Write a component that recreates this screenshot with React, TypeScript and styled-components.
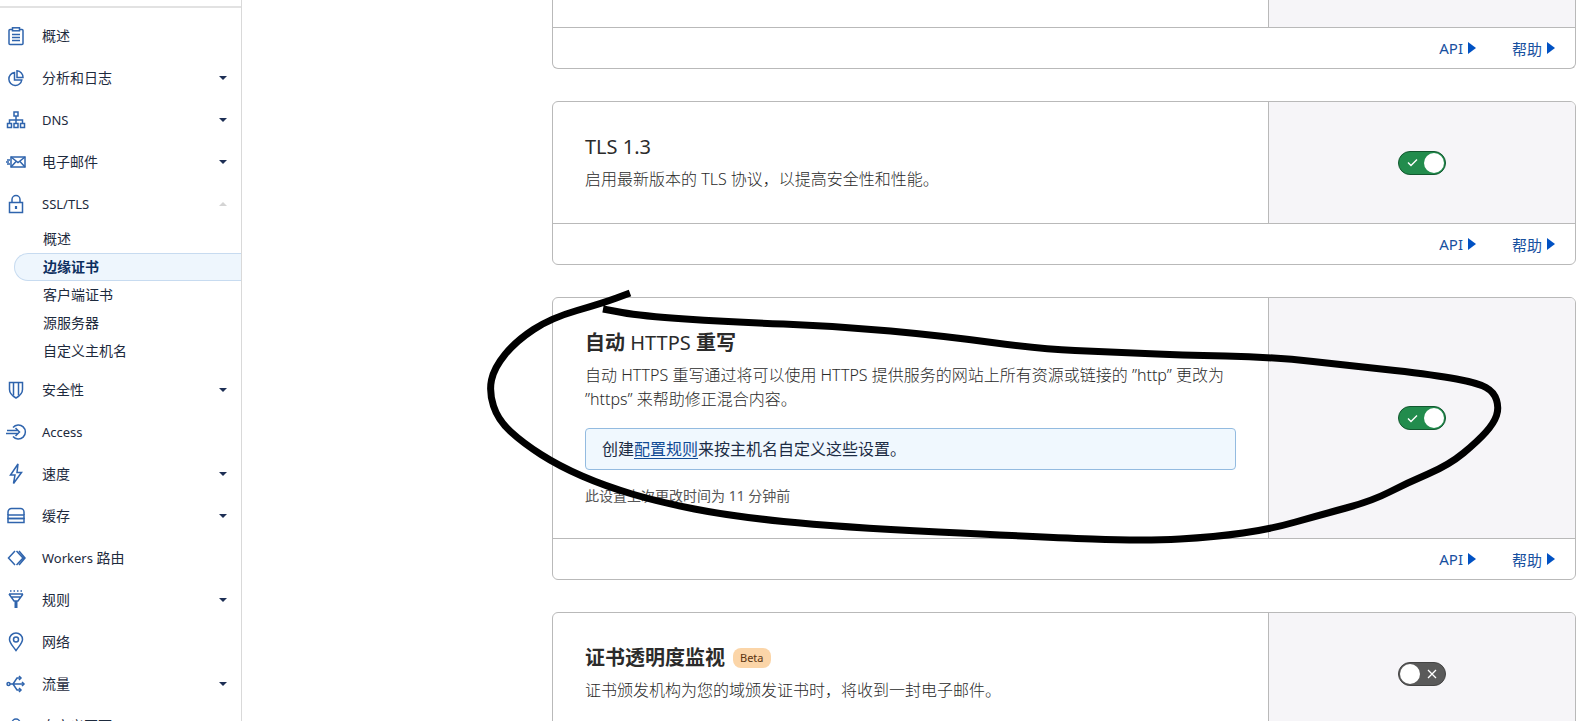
import React from 'react';
import styled, { createGlobalStyle } from 'styled-components';

const GlobalStyle = createGlobalStyle`
  html, body {
    margin: 0;
    padding: 0;
    background: #fff;
  }
  body {
    font-family: "Noto Sans", "Noto Sans CJK SC", sans-serif;
    color: #313131;
  }
`;

const Page = styled.div`
  position: relative;
  display: flex;
  width: 1582px;
  height: 721px;
  overflow: hidden;
`;

const Sidebar = styled.nav`
  flex: 0 0 242px;
  box-sizing: border-box;
  border-right: 1px solid #d9d9d9;
  padding-top: 6px;
`;

const SidebarTop = styled.div`
  border-top: 2px solid #e2e2e2;
  padding-top: 7px;
`;

const NavRow = styled.div`
  display: flex;
  align-items: center;
  height: 42px;
  padding-left: 7px;
  font-size: 14px;
  color: #1d2a3d;
`;

const NavIcon = styled.svg`
  flex: 0 0 18px;
  width: 18px;
  height: 18px;
  margin-right: 17px;
  fill: none;
  stroke: #2f64ad;
  stroke-width: 1.5;
  overflow: visible;
`;

const NavLabel = styled.span`
  flex: 1;
  margin-bottom: 2px;
`;

const NavLatin = styled.span`
  font-size: 13px;
`;

const Caret = styled.span<{ $up?: boolean }>`
  width: 0;
  height: 0;
  margin-right: 14px;
  border-left: 4px solid transparent;
  border-right: 4px solid transparent;
  ${(p) =>
    p.$up ? 'border-bottom: 4px solid #d4d4d4;' : 'border-top: 4px solid #1d2f55;'}
`;

const SubList = styled.div`
  padding-bottom: 4px;
`;

const SubRow = styled.div<{ $active?: boolean }>`
  box-sizing: border-box;
  height: 28px;
  line-height: 26px;
  font-size: 14px;
  margin-left: 14px;
  padding-left: 28px;
  border: 1px solid ${(p) => (p.$active ? '#c7dbf0' : 'transparent')};
  border-right: none;
  border-radius: 14px 0 0 14px;
  color: ${(p) => (p.$active ? '#0d2f5f' : '#1d2a3d')};
  font-weight: ${(p) => (p.$active ? 700 : 400)};
  background: ${(p) => (p.$active ? '#eef6fd' : 'transparent')};
`;

const Content = styled.main`
  flex: 1;
  padding-left: 310px;
`;

const Card = styled.section<{ $cut?: boolean }>`
  width: 1024px;
  box-sizing: border-box;
  margin-bottom: 32px;
  border: 1px solid #b9b9b9;
  border-radius: ${(p) => (p.$cut ? '0 0 6px 6px' : '6px')};
  ${(p) => p.$cut && 'border-top: none;'}
  overflow: hidden;
`;

const CardMain = styled.div<{ $height: number }>`
  display: flex;
  height: ${(p) => p.$height}px;
`;

const CardBody = styled.div`
  flex: 0 0 716px;
  box-sizing: border-box;
  display: flex;
  flex-direction: column;
  justify-content: center;
  padding: 0 32px 1px;
  border-right: 1px solid #b9b9b9;
`;

const CardSide = styled.div`
  flex: 1;
  display: flex;
  align-items: center;
  justify-content: center;
  background: #f6f5f8;
`;

const CardFooter = styled.div`
  display: flex;
  justify-content: flex-end;
  align-items: center;
  gap: 36px;
  height: 40px;
  padding-right: 20px;
  border-top: 1px solid #b9b9b9;
`;

const FooterLink = styled.a`
  display: flex;
  align-items: center;
  gap: 5px;
  font-size: 15px;
  color: #17509f;
`;

const Arrow = styled.span`
  width: 0;
  height: 0;
  border-top: 6.5px solid transparent;
  border-bottom: 6.5px solid transparent;
  border-left: 8px solid #0051c3;
`;

const Title = styled.h3`
  display: flex;
  align-items: center;
  gap: 8px;
  margin: 0 0 6px;
  height: 28px;
  line-height: 28px;
  font-size: 20px;
  font-weight: 400;
  color: #2b2b2b;
  white-space: pre;
`;

const TitleCjk = styled.span`
  font-weight: 700;
`;

const Badge = styled.span`
  padding: 0 7px;
  height: 20px;
  line-height: 20px;
  border-radius: 8px;
  background: #fbd5a8;
  color: #5c3410;
  font-size: 11px;
`;

const Description = styled.p`
  margin: 0;
  font-size: 16px;
  line-height: 24px;
  font-weight: 300;
  color: #2a2a2a;
`;

const Callout = styled.div`
  box-sizing: border-box;
  height: 42px;
  line-height: 40px;
  margin-top: 17px;
  padding-left: 16px;
  border: 1px solid #93bbe0;
  border-radius: 4px;
  background: #f0f8fe;
  font-size: 16px;
  color: #1c2c44;
`;

const CalloutLink = styled.a`
  color: #0f4a94;
  text-decoration: underline;
  text-underline-offset: 3px;
`;

const Meta = styled.div`
  margin-top: 16px;
  height: 20px;
  line-height: 20px;
  font-size: 14px;
  color: #555;
`;

const Toggle = styled.div<{ $on: boolean }>`
  position: relative;
  box-sizing: border-box;
  width: 48px;
  height: 24px;
  border-radius: 12px;
  background: ${(p) => (p.$on ? '#228c4d' : '#5a5a5a')};
  border: 1px solid ${(p) => (p.$on ? '#12572f' : '#444')};
  display: flex;
  align-items: center;
  justify-content: ${(p) => (p.$on ? 'flex-start' : 'flex-end')};
  padding: 0 8px;
`;

const Knob = styled.span<{ $on: boolean }>`
  position: absolute;
  top: 1px;
  ${(p) => (p.$on ? 'right: 1px;' : 'left: 1px;')}
  width: 20px;
  height: 20px;
  border-radius: 50%;
  background: #fff;
`;

const InkLayer = styled.svg`
  position: absolute;
  inset: 0;
  pointer-events: none;
`;

const icons: Record<string, React.ReactNode> = {
  overview: (
    <>
      <rect x="2" y="2.5" width="14" height="15" rx="1" />
      <rect x="5.5" y="0.8" width="7" height="3" fill="#fff" />
      <path d="M5 7.5h8M5 10.5h8M5 13.5h8" />
    </>
  ),
  analytics: (
    <>
      <path d="M7.5 3.5a6.5 6.5 0 1 0 7.3 7.5H7.5z" />
      <path d="M10 1.8a6.5 6.5 0 0 1 6 6.7h-6z" />
    </>
  ),
  dns: (
    <>
      <rect x="7" y="1" width="4" height="4" />
      <rect x="0.500" y="12.500" width="4" height="4" />
      <rect x="7" y="12.500" width="4" height="4" />
      <rect x="13.500" y="12.500" width="4" height="4" />
      <path d="M9 5v7.500M2.500 12.500V9h13v3.500" />
    </>
  ),
  email: (
    <>
      <rect x="4" y="4" width="14" height="10" />
      <path d="M4 4l7 5.500L18 4M4 14l5.500-6M18 14l-5.500-6" />
      <path d="M0 7h3M-1 9h3M0 11h3" />
    </>
  ),
  lock: (
    <>
      <rect x="2.500" y="7.500" width="13" height="10" />
      <path d="M5 7.500V4.500a4 4 0 0 1 8 0v3" />
      <path d="M9 11v3" strokeWidth="2.200" />
    </>
  ),
  shield: (
    <>
      <path d="M2.500 1.500h13v7c0 4-3 6.500-6.500 8.500-3.500-2-6.500-4.500-6.500-8.500z" />
      <path d="M6.500 1.500v13M11.500 1.500v13" />
    </>
  ),
  access: (
    <>
      <path d="M6 4.500a7 7 0 1 1 0 9" />
      <path d="M0 7.500h11M-1 10.500h12M8.500 5l4 4-4 4" />
    </>
  ),
  speed: <path d="M11 -1L3.500 10h4.500L6.500 18.500 14.500 7.500h-4.500z" />,
  cache: (
    <>
      <path d="M1 8V5a3.500 3.500 0 0 1 3.500-3.500h9A3.500 3.500 0 0 1 17 5v3" />
      <rect x="1" y="8" width="16" height="3.500" />
      <rect x="1" y="11.500" width="16" height="4" />
    </>
  ),
  workers: <path d="M8 2L1.500 9 8 16M9.500 2L16 9 9.500 16M12 2L18 9l-6 7" />,
  rules: (
    <>
      <path d="M3 0h1.500M6.500 0H8M10 0h1.500M13.500 0H15" />
      <path d="M2 3h14M4 6h10M2 3l5 7h4l5-7" />
      <path d="M9 10v7" strokeWidth="3" />
    </>
  ),
  network: (
    <>
      <path d="M9 17.500C5.500 12.500 2.500 10 2.500 6.500a6.500 6.500 0 0 1 13 0c0 3.500-3 6-6.500 11z" />
      <circle cx="9" cy="6.500" r="2.500" />
    </>
  ),
  traffic: (
    <>
      <circle cx="1.500" cy="9" r="1.500" />
      <path d="M3 9h14M6 9l4-6h3M6 9l4 6h3" />
      <path d="M12 1l2 2-2 2M15 7l2 2-2 2M12 13l2 2-2 2" />
    </>
  ),
  pages: <circle cx="9" cy="6" r="4" />,
};

const NavItem = ({ icon, label, caret }: { icon: string; label: React.ReactNode; caret?: 'up' | 'down' }) => (
  <NavRow>
    <NavIcon viewBox="0 0 18 18">{icons[icon]}</NavIcon>
    <NavLabel>{label}</NavLabel>
    {caret && <Caret $up={caret === 'up'} />}
  </NavRow>
);

const Switch = ({ on }: { on: boolean }) => (
  <Toggle $on={on}>
    {on ? (
      <svg width="11" height="9" viewBox="0 0 11 9" fill="none" stroke="#fff" strokeWidth="1.4">
        <path d="M1 4.500l3 3 6-6" />
      </svg>
    ) : (
      <svg width="10" height="10" viewBox="0 0 10 10" fill="none" stroke="#fff" strokeWidth="1.300">
        <path d="M1 1l8 8M9 1l-8 8" />
      </svg>
    )}
    <Knob $on={on} />
  </Toggle>
);

const Footer = () => (
  <CardFooter>
    <FooterLink>
      API <Arrow />
    </FooterLink>
    <FooterLink>
      帮助 <Arrow />
    </FooterLink>
  </CardFooter>
);

// hand-drawn circle round the third card, traced from the screenshot
const inkPoints: [number, number][] = [
  [630, 293], [603, 303], [551, 318], [516, 341], [494, 368], [489, 392], [498, 420],
  [523, 443], [559, 466], [605, 486], [659, 502], [730, 516], [837, 527], [1040, 537],
  [1145, 541], [1215, 537], [1271, 529], [1320, 515], [1372, 501], [1407, 483], [1449, 465],
  [1478, 441], [1494, 423], [1499, 408], [1494, 392], [1478, 383], [1435, 375], [1355, 366],
  [1271, 357], [1180, 355], [1110, 352], [1040, 349], [944, 336], [837, 326], [730, 322],
  [641, 316], [603, 309],
];

const inkPath =
  inkPoints.reduce((d, [x, y], i) => {
    if (i === 0) return `M${x} ${y}`;
    const [px, py] = inkPoints[i - 1];
    return i === 1 ? `${d} L${(x + px) / 2} ${(y + py) / 2}` : `${d} Q${px} ${py} ${(x + px) / 2} ${(y + py) / 2}`;
  }, '') + ' L603 309';

export default function App() {
  return (
    <>
      <GlobalStyle />
      <Page>
        <Sidebar>
          <SidebarTop>
            <NavItem icon="overview" label="概述" />
            <NavItem icon="analytics" label="分析和日志" caret="down" />
            <NavItem icon="dns" label={<NavLatin>DNS</NavLatin>} caret="down" />
            <NavItem icon="email" label="电子邮件" caret="down" />
            <NavItem icon="lock" label={<NavLatin>SSL/TLS</NavLatin>} caret="up" />
            <SubList>
              <SubRow>概述</SubRow>
              <SubRow $active>边缘证书</SubRow>
              <SubRow>客户端证书</SubRow>
              <SubRow>源服务器</SubRow>
              <SubRow>自定义主机名</SubRow>
            </SubList>
            <NavItem icon="shield" label="安全性" caret="down" />
            <NavItem icon="access" label={<NavLatin>Access</NavLatin>} />
            <NavItem icon="speed" label="速度" caret="down" />
            <NavItem icon="cache" label="缓存" caret="down" />
            <NavItem icon="workers" label={<><NavLatin>Workers</NavLatin> 路由</>} />
            <NavItem icon="rules" label="规则" caret="down" />
            <NavItem icon="network" label="网络" />
            <NavItem icon="traffic" label="流量" caret="down" />
            <NavItem icon="pages" label="自定义页面" />
          </SidebarTop>
        </Sidebar>
        <Content>
          <Card $cut>
            <CardMain $height={27}>
              <CardBody />
              <CardSide />
            </CardMain>
            <Footer />
          </Card>
          <Card>
            <CardMain $height={121}>
              <CardBody>
                <Title>TLS 1.3</Title>
                <Description>启用最新版本的 TLS 协议，以提高安全性和性能。</Description>
              </CardBody>
              <CardSide>
                <Switch on />
              </CardSide>
            </CardMain>
            <Footer />
          </Card>
          <Card>
            <CardMain $height={240}>
              <CardBody>
                <Title>
                  <span>
                    <TitleCjk>自动</TitleCjk> HTTPS <TitleCjk>重写</TitleCjk>
                  </span>
                </Title>
                <Description>
                  自动 HTTPS 重写通过将可以使用 HTTPS 提供服务的网站上所有资源或链接的 ”http” 更改为 ”https” 来帮助修正混合内容。
                </Description>
                <Callout>
                  创建<CalloutLink>配置规则</CalloutLink>来按主机名自定义这些设置。
                </Callout>
                <Meta>此设置上次更改时间为 11 分钟前</Meta>
              </CardBody>
              <CardSide>
                <Switch on />
              </CardSide>
            </CardMain>
            <Footer />
          </Card>
          <Card>
            <CardMain $height={121}>
              <CardBody>
                <Title>
                  <TitleCjk>证书透明度监视</TitleCjk>
                  <Badge>Beta</Badge>
                </Title>
                <Description>证书颁发机构为您的域颁发证书时，将收到一封电子邮件。</Description>
              </CardBody>
              <CardSide>
                <Switch on={false} />
              </CardSide>
            </CardMain>
          </Card>
        </Content>
        <InkLayer width="1582" height="721" viewBox="0 0 1582 721">
          <path d={inkPath} fill="none" stroke="#000" strokeWidth="7" strokeLinecap="butt" strokeLinejoin="round" />
        </InkLayer>
      </Page>
    </>
  );
}
